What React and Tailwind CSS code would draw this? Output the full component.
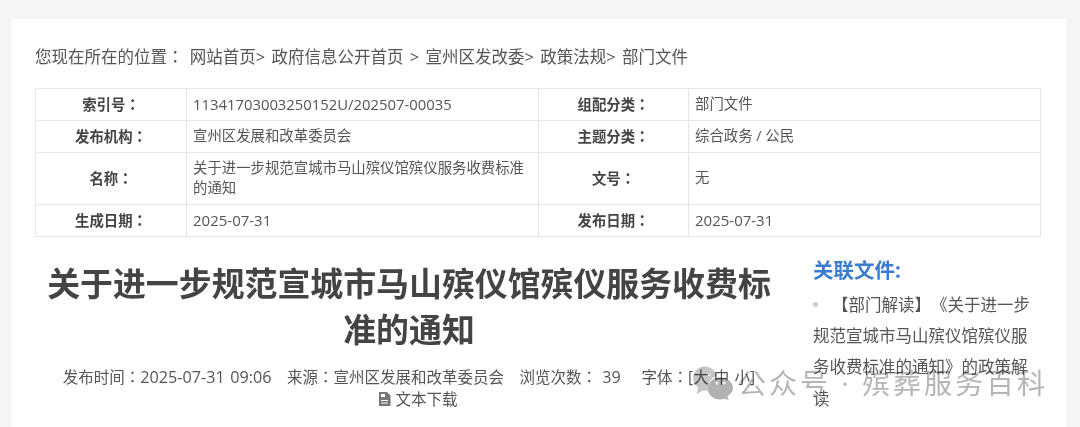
import React from 'react';

// centred full-width colon, as the page's own font draws it
const C = () => <span className="font-['Noto_Sans_CJK_TC']">：</span>;

const rows = [
  { h: 'h-[32px]', a: '索引号', b: <span className="text-[14.85px]">11341703003250152U/202507-00035</span>, c: '组配分类', d: '部门文件' },
  { h: 'h-[32px]', a: '发布机构', b: '宣州区发展和改革委员会', c: '主题分类', d: '综合政务 / 公民' },
  { h: 'h-[52px]', a: '名称', b: '关于进一步规范宣城市马山殡仪馆殡仪服务收费标准的通知', c: '文号', d: '无' },
  { h: 'h-[32px]', a: '生成日期', b: <span className="text-[15px]">2025-07-31</span>, c: '发布日期', d: <span className="text-[15px]">2025-07-31</span> },
];

const Label = ({ children }) => (
  <td className="border border-[#e6e6e6] text-center font-bold text-[14.4px] text-[#444]">{children}<C /></td>
);

const Value = ({ children }) => (
  <td className="border border-[#e6e6e6] px-[6px] text-[14.4px] leading-[20px] text-[#555]">{children}</td>
);

const Watermark = () => (
  <div className="absolute left-[693px] top-[366px] flex items-start mix-blend-multiply">
    <svg width="40" height="34" viewBox="0 0 40 34">
      <path d="M12 .5C5.400.5 0 5.500 0 12c0 3.800 1.900 7 5 9.200L3.800 28l6-3.500c1 .2 1.800.3 2.700.3 1 0 1.500-.1 2-.2C14 16 20 10 24 10.500 22.500 4.500 17.500.5 12 .5z" fill="#bfbfbf" fillOpacity="0.9" />
      <path d="M27 11.500c-7 0-12.500 5-12.500 11s5.500 11 12.500 11c1.500 0 3-.2 4.300-.7l4.200 1.200-1-4c3.300-2 5.500-4.600 5.500-7.500 0-6-5.500-11-12.500-11z" fill="#aeaeae" fillOpacity="0.95" />
      <circle cx="24" cy="17" r="1.500" fill="#fff" fillOpacity="0.85" />
      <circle cx="31" cy="17" r="1.500" fill="#fff" fillOpacity="0.85" />
      <circle cx="8" cy="9" r="1.500" fill="#fff" fillOpacity="0.7" />
      <circle cx="16" cy="9" r="1.500" fill="#fff" fillOpacity="0.7" />
    </svg>
    <span className="ml-[5px] text-[28px] leading-[34px] tracking-[3px] text-[#a8a8a8]/85 whitespace-nowrap">公众号 · 殡葬服务百科</span>
  </div>
);

export default function App() {
  return (
    <div className="relative h-[427px] overflow-hidden bg-[#f5f5f5] pl-[11px] pr-[14px] pt-[19px] font-['Open_Sans','Noto_Sans_CJK_SC',sans-serif]">
      <div className="h-[420px] bg-white px-[24px]">
        <div className="h-[68.500px] pt-[25px] text-[16.5px] leading-[24px] text-[#555] whitespace-nowrap [word-spacing:2px]">
          您现在所在的位置<C /> 网站首页&gt; 政府信息公开首页 &gt; 宣州区发改委&gt; 政策法规&gt; 部门文件
        </div>
        <table className="w-[1005px] table-fixed border-collapse">
          <colgroup>
            <col className="w-[151px]" />
            <col className="w-[352px]" />
            <col className="w-[150px]" />
            <col className="w-[352px]" />
          </colgroup>
          <tbody>
            {rows.map((r) => (
              <tr key={r.a} className={r.h}>
                <Label>{r.a}</Label>
                <Value>{r.b}</Value>
                <Label>{r.c}</Label>
                <Value>{r.d}</Value>
              </tr>
            ))}
          </tbody>
        </table>
        <div className="flex">
          <div className="w-[748px] text-center">
            <h1 className="pt-[24px] text-[32.9px] font-bold leading-[46px] text-[#444] px-[10px]">
              关于进一步规范宣城市马山殡仪馆殡仪服务收费标准的通知
            </h1>
            <div className="pt-[12px] text-[15.5px] leading-[22px] text-[#555]">
              <div className="whitespace-nowrap [word-spacing:1.2px]">
                发布时间<C /><span className="text-[16.2px]">2025-07-31 09:06</span>　来源<C />宣州区发展和改革委员会　浏览次数<C /> <span className="text-[16.2px]">39</span> 　字体<C />[大 中 小]
              </div>
              <div className="flex items-center justify-center gap-[4px] pl-[18px]">
                <svg width="13" height="14" viewBox="0 0 13 14">
                  <path d="M1 0h8l3.500 3.500V14H1z" fill="#777" />
                  <rect x="3" y="2" width="4" height="3" fill="#fff" />
                  <rect x="3" y="8" width="7" height="1" fill="#fff" />
                  <rect x="3" y="10.500" width="7" height="1" fill="#fff" />
                </svg>
                文本下载
              </div>
            </div>
          </div>
          <div className="ml-[30px] w-[222px] pt-[19px]">
            <h3 className="text-[20.5px] font-bold leading-[28px] text-[#3a7ccf]">关联文件:</h3>
            <ul className="mt-[5px] text-[16.5px] leading-[31.4px] text-[#555] [text-spacing-trim:space-all]">
              <li className="relative indent-[19px]">
                <span className="absolute left-0 top-[13px] h-[5px] w-[5px] rounded-full bg-[#ccc]" />
                【部门解读】《关于进一步规范宣城市马山殡仪馆殡仪服务收费标准的通知》的政策解读
              </li>
            </ul>
          </div>
        </div>
      </div>
      <Watermark />
    </div>
  );
}
